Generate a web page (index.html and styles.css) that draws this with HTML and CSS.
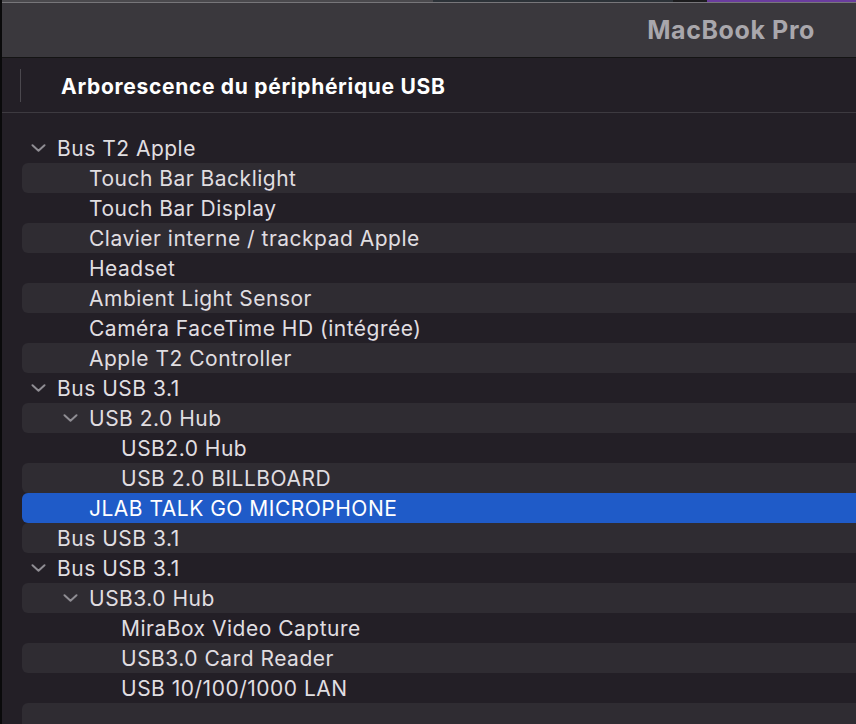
FILE: index.html
```html
<!DOCTYPE html>
<html lang="fr">
<head>
<meta charset="utf-8">
<title>Arborescence du périphérique USB</title>
<link rel="stylesheet" href="styles.css">
</head>
<body>
<div class="window">
  <div class="topstrip"><span class="seg seg-a"></span><span class="seg seg-b"></span><span class="seg seg-c"></span><span class="seg seg-d"></span></div>
  <header class="titlebar"><h1 class="machine">MacBook Pro</h1></header>
  <div class="section-head">
    <span class="divider"></span>
    <h2 class="section-title">Arborescence du périphérique USB</h2>
  </div>
  <ul class="tree">
    <li class="row lvl0"><svg class="chev" viewBox="0 0 15 8"><path d="M1.5 1.2 L7.5 6.8 L13.5 1.2"/></svg><span>Bus T2 Apple</span></li>
    <li class="row lvl1"><span>Touch Bar Backlight</span></li>
    <li class="row lvl1"><span>Touch Bar Display</span></li>
    <li class="row lvl1"><span>Clavier interne / trackpad Apple</span></li>
    <li class="row lvl1"><span>Headset</span></li>
    <li class="row lvl1"><span>Ambient Light Sensor</span></li>
    <li class="row lvl1"><span>Caméra FaceTime HD (intégrée)</span></li>
    <li class="row lvl1"><span>Apple T2 Controller</span></li>
    <li class="row lvl0"><svg class="chev" viewBox="0 0 15 8"><path d="M1.5 1.2 L7.5 6.8 L13.5 1.2"/></svg><span>Bus USB 3.1</span></li>
    <li class="row lvl1"><svg class="chev" viewBox="0 0 15 8"><path d="M1.5 1.2 L7.5 6.8 L13.5 1.2"/></svg><span>USB 2.0 Hub</span></li>
    <li class="row lvl2"><span>USB2.0 Hub</span></li>
    <li class="row lvl2"><span>USB 2.0 BILLBOARD</span></li>
    <li class="row lvl1 selected"><span>JLAB TALK GO MICROPHONE</span></li>
    <li class="row lvl0"><span>Bus USB 3.1</span></li>
    <li class="row lvl0"><svg class="chev" viewBox="0 0 15 8"><path d="M1.5 1.2 L7.5 6.8 L13.5 1.2"/></svg><span>Bus USB 3.1</span></li>
    <li class="row lvl1"><svg class="chev" viewBox="0 0 15 8"><path d="M1.5 1.2 L7.5 6.8 L13.5 1.2"/></svg><span>USB3.0 Hub</span></li>
    <li class="row lvl2"><span>MiraBox Video Capture</span></li>
    <li class="row lvl2"><span>USB3.0 Card Reader</span></li>
    <li class="row lvl2"><span>USB 10/100/1000 LAN</span></li>
    <li class="row lvl0 empty"></li>
  </ul>
</div>
</body>
</html>
```
FILE: styles.css
```css
* { box-sizing: border-box; }
html, body { margin: 0; padding: 0; }
body {
  width: 856px;
  height: 724px;
  overflow: hidden;
  background: #231f26;
  font-family: Inter, "Noto Sans", "DejaVu Sans", sans-serif;
  -webkit-font-smoothing: antialiased;
}
.window {
  height: 724px;
  display: flex;
  flex-direction: column;
  border-left: 2px solid #0a0a0b;
}
.window > * { flex-shrink: 0; }
.topstrip {
  height: 3px;
  display: flex;
  border-bottom: 1px solid #77767a;
  background: #1f1f21;
}
.seg { height: 2px; display: block; }
.seg-a { width: 431px; background: #4a494d; }
.seg-b { width: 240px; background: #2c3238; }
.seg-c { width: 34px; background: #1c1c1e; }
.seg-d { flex: 1; background: #6a3c9e; }
.titlebar {
  height: 55px;
  background: #3a383d;
  border-bottom: 1px solid #141414;
  display: flex;
  justify-content: flex-end;
  align-items: center;
  padding-right: 41px;
  padding-bottom: 1px;
}
.machine {
  margin: 0;
  font-size: 25px;
  font-weight: 700;
  color: #a9a7ac;
  letter-spacing: 0.6px;
}
.section-head {
  height: 55px;
  display: flex;
  align-items: center;
  border-bottom: 1px solid #3d3a40;
}
.divider {
  width: 1px;
  height: 33px;
  margin-left: 18px;
  background: #4b484e;
}
.section-title {
  margin: 2px 0 0 40px;
  font-size: 21px;
  font-weight: 700;
  color: #ffffff;
  letter-spacing: 0.7px;
}
.tree {
  list-style: none;
  margin: 0;
  padding: 20px 0 0 20px;
}
.row {
  height: 30px;
  display: flex;
  align-items: center;
  border-radius: 6px 0 0 6px;
  font-size: 21px;
  letter-spacing: 0.5px;
  color: #e0dee1;
  white-space: nowrap;
}
.row:nth-child(even) { background: #2f2c32; }
.row.selected { background: #1f5bc8; color: #ffffff; }
.lvl0 { padding-left: 35px; }
.lvl1 { padding-left: 67px; }
.lvl2 { padding-left: 99px; }
.chev {
  width: 15px;
  height: 8px;
  margin-left: -26px;
  margin-right: 11px;
  fill: none;
  stroke: #8f8d93;
  stroke-width: 2;
  stroke-linecap: round;
  stroke-linejoin: round;
}
```
